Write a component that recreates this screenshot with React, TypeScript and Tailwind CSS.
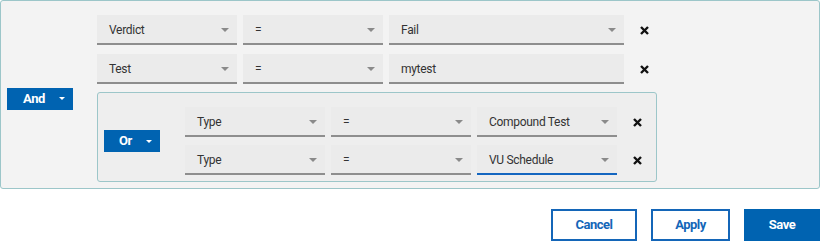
const blue = 'bg-[#0063b1]'

function Caret({ color = '#8a8a8a', w = 8, h = 4 }: { color?: string; w?: number; h?: number }) {
  return (
    <svg width={w} height={h} viewBox={`0 0 ${w} ${h}`} className="shrink-0">
      <path d={`M0 0 L${w} 0 L${w / 2} ${h} Z`} fill={color} />
    </svg>
  )
}

interface Cell {
  label: string
  width: string
  active?: boolean
  text?: boolean
}

function Field({ label, width, active = false, text = false }: Cell) {
  return (
    <div
      className={`${width} h-[30px] flex items-center justify-between pl-3 pr-[8px] pt-[2px] bg-[#ebebeb] border-b-2 ${
        active ? 'border-[#1466c0]' : 'border-[#8e8e8e]'
      } text-[12px] tracking-[-0.3px] text-[#333]`}
    >
      <span>{label}</span>
      {!text && <Caret />}
    </div>
  )
}

function Remove() {
  return (
    <svg width="9" height="9" viewBox="0 0 9 9" className="ml-[10px] shrink-0">
      <path d="M1 1 L8 8 M8 1 L1 8" stroke="#111" strokeWidth="2.4" />
    </svg>
  )
}

function OpButton({ label, width, pl }: { label: string; width: string; pl: string }) {
  return (
    <button className={`${width} h-[22px] ${blue} text-white font-bold text-[13px] tracking-[-0.4px] flex items-center justify-between ${pl} pr-[8px] shrink-0`}>
      <span>{label}</span>
      <Caret color="#ffffff" w={6} h={3} />
    </button>
  )
}

function Row({ cells, className = '' }: { cells: Cell[]; className?: string }) {
  return (
    <div className={`flex items-center gap-[6px] ${className}`}>
      {cells.map((c, i) => (
        <Field key={i} {...c} />
      ))}
      <Remove />
    </div>
  )
}

export default function App() {
  return (
    <div className="w-[822px] h-[246px] bg-white" style={{ fontFamily: 'Roboto, "Liberation Sans", sans-serif' }}>
      <div className="w-[820px] border border-[#9cc6c9] rounded-[3px] bg-[#f3f3f3] flex items-center pl-[6px] pt-[14px] pb-[6px]">
        <OpButton label="And" width="w-[66px]" pl="pl-[16px]" />
        <div className="ml-[24px] flex flex-col">
          <Row
            cells={[
              { label: 'Verdict', width: 'w-[140px]' },
              { label: '=', width: 'w-[140px]' },
              { label: 'Fail', width: 'w-[235px]' },
            ]}
          />
          <Row
            className="mt-[9px]"
            cells={[
              { label: 'Test', width: 'w-[140px]' },
              { label: '=', width: 'w-[140px]' },
              { label: 'mytest', width: 'w-[235px]', text: true },
            ]}
          />
          <div className="mt-[8px] w-[560px] border border-[#9cc6c9] rounded-[3px] bg-[#eeeeee] flex items-center pl-[6px] pt-[14px] pb-[6px]">
            <OpButton label="Or" width="w-[56px]" pl="pl-[15px]" />
            <div className="ml-[25px] flex flex-col gap-[8px]">
              <Row
                cells={[
                  { label: 'Type', width: 'w-[140px]' },
                  { label: '=', width: 'w-[140px]' },
                  { label: 'Compound Test', width: 'w-[140px]' },
                ]}
              />
              <Row
                cells={[
                  { label: 'Type', width: 'w-[140px]' },
                  { label: '=', width: 'w-[140px]' },
                  { label: 'VU Schedule', width: 'w-[140px]', active: true },
                ]}
              />
            </div>
          </div>
        </div>
      </div>
      <div className="flex justify-end gap-[14px] pr-[2px] mt-[20px] text-[13px] font-bold tracking-[-0.5px]">
        <button className="w-[86px] h-[32px] border-2 border-[#1466b8] bg-white text-[#1466b8]">Cancel</button>
        <button className="w-[79px] h-[32px] border-2 border-[#1466b8] bg-white text-[#1466b8]">Apply</button>
        <button className={`w-[76px] h-[32px] ${blue} text-white`}>Save</button>
      </div>
    </div>
  )
}
